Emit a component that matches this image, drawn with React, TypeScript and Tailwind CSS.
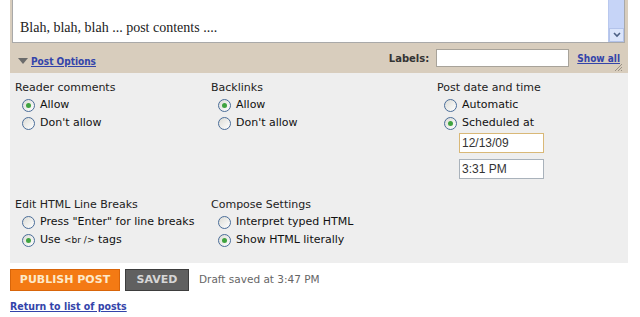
import React from "react"

function Radio({ checked, label }: { checked?: boolean; label: React.ReactNode }) {
  return (
    <div className="flex items-center h-[18px] pl-[7px]">
      <span className="w-[13px] h-[13px] rounded-full border border-[#4a6d99] bg-gradient-to-br from-[#dcdcd6] to-white flex items-center justify-center">
        {checked && <span className="w-[5px] h-[5px] rounded-full bg-[#3fa33f]" />}
      </span>
      <span className="ml-[5px] text-[11px] text-[#111]">{label}</span>
    </div>
  )
}

function Group({ title, children }: { title: string; children: React.ReactNode }) {
  return (
    <div className="flex flex-col">
      <div className="text-[11px] text-[#222] h-[17px] leading-[17px]">{title}</div>
      {children}
    </div>
  )
}

export default function App() {
  return (
    <div className="w-[640px] h-[317px] bg-white overflow-hidden font-['DejaVu_Sans',Verdana,sans-serif]">
      <div className="ml-[10px] w-[618px]">
        {/* editor + options bar */}
        <div className="bg-[#d8cdbd] pl-[2px] pr-[3px]">
          <div className="relative h-[43px] bg-white border border-t-0 border-[#a9a9a9] flex items-end">
            <p className="font-['Liberation_Serif',serif] text-[14px] text-[#222] pl-[7px] pb-[4px]">
              Blah, blah, blah ... post contents ....
            </p>
            <div className="absolute right-0 top-0 bottom-0 w-[16px] bg-[#c6d4f7] border-l border-[#b9c8ee]">
              <div className="absolute bottom-0 left-0 right-0 h-[14px] bg-[#dbe5fb] border border-[#b3c3ea] flex items-center justify-center">
                <svg width="8" height="6" viewBox="0 0 8 6">
                  <path d="M1 1 L4 4 L7 1" stroke="#4d6185" strokeWidth="1.6" fill="none" />
                </svg>
              </div>
            </div>
          </div>
          <div className="relative h-[30px] flex items-center pl-[6px] pr-[5px]">
            <div className="flex items-center mt-[6px]">
              <svg width="10" height="6" viewBox="0 0 10 6" className="mr-[3px]">
                <path d="M0 0 L10 0 L5 6 Z" fill="#6b6b6b" />
              </svg>
              <a className="text-[10px] font-bold font-stretch-condensed text-[#3344aa] underline">Post Options</a>
            </div>
            <div className="ml-auto flex items-center">
              <span className="text-[10px] font-bold text-[#333] mr-[7px]">Labels:</span>
              <span className="w-[133px] h-[18px] bg-white border border-[#a8a39a]" />
              <a className="ml-[8px] text-[10px] font-bold font-stretch-condensed text-[#3344aa] underline">Show all</a>
            </div>
            <svg width="10" height="10" viewBox="0 0 10 10" className="absolute right-[2px] bottom-[1px]">
              <path d="M9 2 L2 9 M9 5 L5 9 M9 8 L8 9" stroke="#9a9285" strokeWidth="1" />
            </svg>
          </div>
        </div>

        {/* options panel */}
        <div className="h-[190px] bg-[#eeeeee] pl-[5px] pt-[6px]">
          <div className="grid grid-cols-[196px_226px_1fr]">
            <Group title="Reader comments">
              <Radio checked label="Allow" />
              <Radio label="Don't allow" />
            </Group>
            <Group title="Backlinks">
              <Radio checked label="Allow" />
              <Radio label="Don't allow" />
            </Group>
            <Group title="Post date and time">
              <Radio label="Automatic" />
              <Radio checked label="Scheduled at" />
              <div className="pl-[22px] pt-[1px] flex flex-col gap-[6px]">
                <div className="w-[85px] h-[20px] bg-white border border-[#d9b877] flex items-center px-[2px] font-['Liberation_Sans',Arial,sans-serif] text-[12px] text-[#333]">
                  12/13/09
                </div>
                <div className="w-[85px] h-[20px] bg-white border border-[#a9b2bb] flex items-center px-[2px] font-['Liberation_Sans',Arial,sans-serif] text-[12px] text-[#333]">
                  3:31 PM
                </div>
              </div>
            </Group>
          </div>
          <div className="grid grid-cols-[196px_226px_1fr] mt-[17px]">
            <Group title="Edit HTML Line Breaks">
              <Radio label={'Press "Enter" for line breaks'} />
              <Radio checked label={<span>Use <span className="text-[9px]">&lt;br /&gt;</span> tags</span>} />
            </Group>
            <Group title="Compose Settings">
              <Radio label="Interpret typed HTML" />
              <Radio checked label="Show HTML literally" />
            </Group>
          </div>
        </div>
      </div>

      {/* actions */}
      <div className="pl-[10px] pt-[6px] flex items-center">
        <button className="w-[110px] h-[22px] bg-[#f47a14] border border-[#d8650a] text-[#fde9c9] text-[11px] font-bold">
          PUBLISH POST
        </button>
        <button className="ml-[5px] w-[64px] h-[22px] bg-[#606060] border border-[#3d3d3d] text-[#d6d6d6] text-[11px] font-bold">
          SAVED
        </button>
        <span className="ml-[10px] text-[10.5px] text-[#666]">Draft saved at 3:47 PM</span>
      </div>
      <div className="pl-[10px] mt-[2px]">
        <a className="text-[10.5px] font-bold font-stretch-condensed text-[#3344aa] underline">Return to list of posts</a>
      </div>
    </div>
  )
}
